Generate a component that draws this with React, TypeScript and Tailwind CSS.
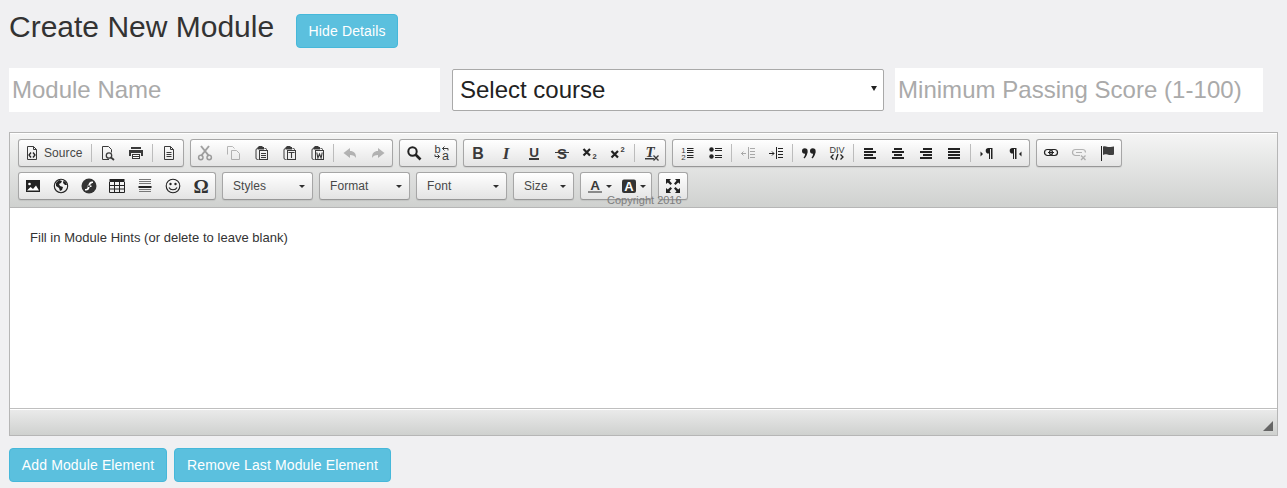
import React from "react";

const S = ({ children, o }: { children: React.ReactNode; o?: number }) => (
  <svg width="16" height="16" viewBox="0 0 16 16" className="block overflow-visible" style={o ? { opacity: o } : undefined}>{children}</svg>
);
const C = "#3a3a3a";
const sans = "'Liberation Sans', Arial, sans-serif";
const serif = "'Liberation Serif', serif";
const T = (p: { x: number; y: number; s: number; b?: boolean; i?: boolean; f?: string; c?: string; a?: "middle" | "start"; t: string }) => (
  <text x={p.x} y={p.y} fontSize={p.s} fontWeight={p.b ? 700 : 400} fontStyle={p.i ? "italic" : "normal"} fontFamily={p.f || sans} fill={p.c || C} textAnchor={p.a || "middle"}>{p.t}</text>
);
const Doc = () => <path d="M3.5 1.5h6l3 3v10h-9z M9.5 1.5v3h3" fill="none" stroke={C} />;
const Clip = () => (
  <>
    <path d="M5.5 3.500h-1a1.500 1.500 0 0 0-1.500 1.500v8a1.500 1.500 0 0 0 1.500 1.500h1" fill="none" stroke={C} />
    <path d="M5.500 1h4v1h1.500v2.500H4.500V2h1z" fill={C} />
    <path d="M11.500 3.500h1a1 1 0 0 1 1 1v1" fill="none" stroke={C} />
    <rect x="6.500" y="5.500" width="8" height="9" fill="none" stroke={C} />
  </>
);
const Lines = ({ d }: { d: [number, number][] }) => (
  <>{d.map(([x, w], i) => <rect key={i} x={x} y={3 + i * 3} width={w} height="2" fill="#222" />)}</>
);

const icons: Record<string, React.ReactNode> = {
  source: <S><Doc /><path d="M7 7.500 5 10l2 2.500M9 7.500 11 10l-2 2.500" fill="none" stroke="#222" strokeWidth="1.300" /></S>,
  preview: <S><path d="M9 14.500H2.500v-13h6l3 3v3" fill="none" stroke={C} /><circle cx="9" cy="10.500" r="2.700" fill="none" stroke={C} strokeWidth="1.300" /><path d="m11 12.500 3 2.500" stroke={C} strokeWidth="1.800" /></S>,
  print: <S><path d="M3 2h10v2H3z" fill={C} /><path d="M1 5h14v6h-2V8H3v3H1z" fill={C} /><path d="M4 9h8v5H4z" fill={C} /><path d="M5 10.500h6M5 12.500h6" stroke="#fff" /></S>,
  newpage: <S><Doc /><path d="M5.500 7.500h5M5.500 9.500h5M5.500 11.500h5" stroke={C} /></S>,
  cut: <S o={0.4}><path d="m4 1 8 10M12 1 4 11" stroke="#222" strokeWidth="2" /><circle cx="3.800" cy="12.500" r="2.200" fill="none" stroke="#222" strokeWidth="1.500" /><circle cx="12.200" cy="12.500" r="2.200" fill="none" stroke="#222" strokeWidth="1.500" /></S>,
  copy: <S o={0.3}><path d="M2.500 9.500v-8h5l2 2" fill="none" stroke="#222" /><path d="M6.500 5.500h5l3 3v6h-8z" fill="none" stroke="#222" /></S>,
  paste: <S><Clip /><path d="M8 8.500h5M8 10.500h5M8 12.500h5" stroke={C} /></S>,
  pastetext: <S><Clip /><path d="M8 8v-.500h5V8M10.500 7.500v5.500" fill="none" stroke={C} strokeWidth="1.100" /></S>,
  pasteword: <S><Clip /><path d="m7.800 7.500 1.100 5.500 1.600-4 1.600 4 1.100-5.500" fill="none" stroke={C} strokeWidth="1.100" /></S>,
  undo: <S o={0.3}><path d="M8 3 1.500 8 8 13v-3c3 0 5 1 6 3 0-5-2-7-6-7z" fill="#222" /></S>,
  redo: <S o={0.3}><path d="M8 3l6.500 5L8 13v-3c-3 0-5 1-6 3 0-5 2-7 6-7z" fill="#222" /></S>,
  find: <S><circle cx="6.500" cy="6.500" r="4.200" fill="none" stroke="#222" strokeWidth="2" /><path d="m9.500 9.500 5 5" stroke="#222" strokeWidth="2.600" /></S>,
  replace: <S><T x={3.500} y={8} s={11} t="b" /><T x={11.500} y={15} s={12.500} t="a" /><path d="M14 5.500V3.500H8.500M10.500 1.500l-2 2 2 2M1 9.500v2h4.500M3.500 9.500l2 2-2 2" fill="none" stroke={C} /></S>,
  bold: <S><T x={8} y={13.500} s={16} b t="B" /></S>,
  italic: <S><T x={8} y={13.500} s={17} b i f={serif} t="I" /></S>,
  underline: <S><T x={8} y={11.500} s={13.500} b t="U" /><rect x="3" y="13" width="10" height="2" fill={C} /></S>,
  strike: <S><T x={8} y={13.500} s={15} b t="S" /><rect x="1" y="7" width="14" height="1" fill={C} /></S>,
  sub: <S><path d="m1.500 4 6.500 6.500M8 4l-6.500 6.500" stroke="#222" strokeWidth="2.200" /><T x={12.500} y={14} s={7.500} b t="2" /></S>,
  sup: <S><path d="m1.500 6 6.500 6.500M8 6l-6.500 6.500" stroke="#222" strokeWidth="2.200" /><T x={12.500} y={7} s={7.500} b t="2" /></S>,
  removeformat: <S><T x={7} y={12} s={15} b i f={serif} t="T" /><rect x="2" y="13" width="9" height="1.500" fill={C} /><path d="m10.500 10.500 5 5M15.500 10.500l-5 5" stroke={C} strokeWidth="1.300" /></S>,
  numbered: <S><T x={4.500} y={7.500} s={8} t="1" /><T x={4.500} y={15} s={8} t="2" /><path d="M8 3.500h6.500M8 5.500h6.500M8 7.500h6.500M8 10.500h6.500M8 12.500h6.500" stroke="#222" /></S>,
  bullet: <S><circle cx="4.500" cy="4.500" r="2.200" fill="#222" /><circle cx="4.500" cy="11.500" r="2.200" fill="#222" /><path d="M8 3.500h7M8 5.500h7M8 10.500h7M8 12.500h7" stroke="#222" /></S>,
  outdent: <S o={0.35}><path d="M8.500 2v12" stroke="#222" /><path d="M10 3.500h5M10 6.500h5M10 9.500h5M10 12.500h5M1 8.500h5M3.500 6.500l-2 2 2 2" fill="none" stroke="#222" /></S>,
  indent: <S><path d="M8.500 2v12" stroke="#222" /><path d="M10 3.500h5M10 6.500h5M10 9.500h5M10 12.500h5M1 8.500h5M4 6.500l2 2-2 2" fill="none" stroke="#222" /></S>,
  quote: <S><circle cx="3.800" cy="6" r="2.800" fill="#222" /><circle cx="11.800" cy="6" r="2.800" fill="#222" /><path d="M6.600 6.500C6.300 9.500 5.300 12 3.300 13.500L2.500 12.500C3.500 11.500 4.100 10 4.100 8zM14.600 6.500c-.3 3-1.300 5.500-3.300 7l-.8-1c1-1 1.600-2.500 1.600-4.500z" fill="#222" /></S>,
  div: <S><T x={8} y={7.500} s={9} t="DIV" /><path d="M4.500 9.500 2 12l2.500 2.500M11.500 9.500 14 12l-2.500 2.500M9 9 7 15" fill="none" stroke="#222" strokeWidth="1.300" /></S>,
  left: <S><Lines d={[[2, 9], [2, 12], [2, 9], [2, 12]]} /></S>,
  center: <S><Lines d={[[4, 8], [2, 12], [4, 8], [2, 12]]} /></S>,
  right: <S><Lines d={[[5, 9], [2, 12], [5, 9], [2, 12]]} /></S>,
  justify: <S><Lines d={[[2, 12], [2, 12], [2, 12], [2, 12]]} /></S>,
  ltr: <S><path d="M1.500 6.500v5l2.500-2.500z" fill="#222" /><path d="M13.500 3H9.500a2.800 2.800 0 0 0 0 5.600h.5V14h1V4h1v10h1.500z" fill="#222" /></S>,
  rtl: <S><path d="M14.500 6.500v5L12 9z" fill="#222" /><path d="M9.500 3H5.500a2.800 2.800 0 0 0 0 5.600H6V14h1V4h1v10h1.500z" fill="#222" /></S>,
  link: <S><rect x="1.500" y="4.500" width="8" height="6" rx="3" fill="none" stroke="#222" strokeWidth="1.200" /><rect x="6.500" y="4.500" width="8" height="6" rx="3" fill="none" stroke="#222" strokeWidth="1.200" /><path d="M5 7.500h6" stroke="#222" /></S>,
  unlink: <S o={0.3}><path d="M9 10.500H4.500a3 3 0 0 1 0-6h7a3 3 0 0 1 3 3" fill="none" stroke="#222" strokeWidth="1.200" /><path d="M5 7.500h6" stroke="#222" /><path d="m10 10.500 4.500 4.500M14.500 10.500 10 15" stroke="#222" strokeWidth="1.300" /></S>,
  anchor: <S><path d="M2.500 1v15" stroke="#222" /><path d="M4 1.500c3-1 4 .5 6 .5s5-.5 5-.5v8c-2 1-5 .5-6.500 0S5 9 4 10z" fill="#3f3f3f" /></S>,
  image: <S><rect x="1" y="2" width="14" height="12" fill="#222" /><circle cx="4.500" cy="6" r="1.300" fill="#fff" /><path d="M2 12.500 5.500 9l2.500 2 3-3.500 3 5z" fill="#fff" /></S>,
  globe: <S><circle cx="8" cy="8" r="6.700" fill="none" stroke="#222" strokeWidth="1.100" /><path d="M3 5l3-3 3 1-1 2-2 1 1 2 3 1-1 3-2 1-1-3-3-2zM10.500 2.500l2.500 2 1 2.500-2 0-2-2z" fill="#222" /></S>,
  flash: <S><circle cx="8" cy="8" r="7.500" fill="#333" /><path d="M12 3.500c-3-.5-4 1-4.500 3l-1 3c-.3 1-1 1.500-2.500 1.500v1.500c3 .5 4-1 4.500-3l1-3C10 5.500 11 5 12 5z M6.500 7.500h4v1.500h-4z" fill="#fff" /></S>,
  table: <S><rect x="0.500" y="1" width="15" height="3" fill="#222" /><path d="M.5 4v10.500h15V4M.5 7.500h15M.5 11h15M5.500 4v10.500M10.500 4v10.500" fill="none" stroke="#222" /></S>,
  hr: <S><path d="M2 1.500h12M2 3.500h12M2 5.500h12M2 11.500h12M2 13.500h12" stroke="#777" /><rect x="1.500" y="8" width="13" height="2" fill="#222" /></S>,
  smile: <S><circle cx="8" cy="8" r="6.800" fill="none" stroke="#222" strokeWidth="1.100" /><circle cx="5.500" cy="6" r="1.200" fill="#222" /><circle cx="10.500" cy="6" r="1.200" fill="#222" /><path d="M4 9.500c1.500 3 6.500 3 8 0" fill="none" stroke="#222" strokeWidth="1.100" /></S>,
  maximize: <S><path d="M1 1h5L4.500 2.800 7 5.500 5.500 7 2.800 4.500 1 6zM15 1h-5l1.500 1.800L9 5.500 10.500 7l2.700-2.500L15 6zM1 15h5l-1.500-1.800L7 10.500 5.500 9l-2.700 2.500L1 10zM15 15h-5l1.500-1.800L9 10.500 10.500 9l2.700 2.500L15 10z" fill="#222" /></S>,
};

const gradient = "bg-gradient-to-b from-[#ffffff] to-[#e4e4e4] border border-[#a6a6a6] border-b-[#979797] rounded-[3px] shadow-[0_1px_1px_rgba(0,0,0,0.08)] h-[28px]";

const Btn = ({ n }: { n: string }) => (
  <div className="w-[28px] h-[26px] flex items-center justify-center">{icons[n]}</div>
);
const Sep = () => <div className="w-px h-[18px] bg-[#bcbcbc] mx-[2px]" />;
const Group = ({ items }: { items: string[] }) => (
  <div className={`${gradient} flex items-center`}>
    {items.map((n, i) => (n === "|" ? <Sep key={i} /> : <Btn key={i} n={n} />))}
  </div>
);
const Combo = ({ label, w }: { label: string; w: string }) => (
  <div className={`${gradient} ${w} flex items-center pl-[10px] pr-[6px] justify-between`}>
    <span className="text-[12px] tracking-[0.08px] text-[#484848]">{label}</span>
    <span className="w-0 h-0 border-x-[3px] border-x-transparent border-t-[3px] border-t-[#2f2f2f] mr-[1px]" />
  </div>
);
const Arrow = () => <span className="w-0 h-0 border-x-[3px] border-x-transparent border-t-[3px] border-t-[#2f2f2f]" />;

export default function App() {
  return (
    <div className="min-h-[488px] bg-[#f0f0f2] pl-[9px] pr-[9px] pt-[14px] overflow-hidden font-['Liberation_Sans',Arial,sans-serif] text-[#333333]">
      <div className="flex items-center h-[34px]">
        <h1 className="text-[30px] leading-[26px] mb-[8px] font-normal">Create New Module</h1>
        <button className="ml-[22px] h-[34px] w-[102px] whitespace-nowrap text-[14px] tracking-[0.13px] text-white bg-[#5bc0de] border border-[#46b8da] rounded-[4px]">Hide Details</button>
      </div>

      <div className="flex items-center mt-[20px] h-[44px]">
        <input className="w-[431px] h-[44px] bg-white text-[24px] pl-[3px] outline-none placeholder:text-[#aaaaaa]" placeholder="Module Name" />
        <div className="relative ml-[12px] w-[432px] h-[42px] bg-white border border-[#a9a9a9] rounded-[2px] flex items-center pl-[7px] text-[24px] text-[#222222]">
          Select course
          <span className="absolute right-[6px] top-[16px] w-0 h-0 border-x-[3px] border-x-transparent border-t-[5px] border-t-[#222222]" />
        </div>
        <input className="ml-[11px] w-[368px] h-[44px] bg-white text-[24px] tracking-[0.03px] pl-[3px] outline-none placeholder:text-[#aaaaaa]" placeholder="Minimum Passing Score (1-100)" />
      </div>

      <div className="mt-[20px] w-[1269px] h-[304px] border border-[#b6b6b6] flex flex-col bg-white">
        <div className="relative h-[75px] shrink-0 bg-gradient-to-b from-[#f5f5f5] to-[#cfd1cf] border-b border-[#b6b6b6] shadow-[inset_0_1px_0_#ffffff] pl-[8px] pt-[6px] flex flex-col gap-[5px]">
          <div className="flex gap-[6px]">
            <div className={`${gradient} flex items-center`}>
              <div className="w-[70px] h-[26px] flex items-center pl-[5px]">
                {icons.source}
                <span className="ml-[4px] text-[12px] tracking-[0.08px] text-[#474747]">Source</span>
              </div>
              <Sep />
              <Btn n="preview" />
              <Btn n="print" />
              <Sep />
              <Btn n="newpage" />
            </div>
            <Group items={["cut", "copy", "paste", "pastetext", "pasteword", "|", "undo", "redo"]} />
            <Group items={["find", "replace"]} />
            <Group items={["bold", "italic", "underline", "strike", "sub", "sup", "|", "removeformat"]} />
            <Group items={["numbered", "bullet", "|", "outdent", "indent", "|", "quote", "div", "|", "left", "center", "right", "justify", "|", "ltr", "rtl"]} />
            <Group items={["link", "unlink", "anchor"]} />
          </div>
          <div className="flex gap-[6px]">
            <div className={`${gradient} flex items-center`}>
              <Btn n="image" />
              <Btn n="globe" />
              <Btn n="flash" />
              <Btn n="table" />
              <Btn n="hr" />
              <Btn n="smile" />
              <div className="w-[28px] h-[26px] flex items-center justify-center text-[19px] leading-none font-bold font-['Liberation_Serif',serif] text-[#333333]">Ω</div>
            </div>
            <Combo label="Styles" w="w-[91px]" />
            <Combo label="Format" w="w-[91px]" />
            <Combo label="Font" w="w-[91px]" />
            <Combo label="Size" w="w-[61px]" />
            <div className={`${gradient} w-[72px] flex items-center`}>
              <div className="w-[35px] h-[26px] flex items-center pl-[6px] gap-[3px]">
                <svg width="16" height="16" viewBox="0 0 16 16" className="block overflow-visible">
                  <T x={8} y={11.500} s={13.500} b t="A" />
                  <rect x="1" y="13" width="14" height="2" fill="#8a8a8a" />
                </svg>
                <Arrow />
              </div>
              <div className="w-[35px] h-[26px] flex items-center pl-[5px] gap-[3px]">
                <svg width="16" height="16" viewBox="0 0 16 16" className="block overflow-visible">
                  <rect x="1" y="1.500" width="14" height="13.500" rx="2" fill="#333333" />
                  <T x={8} y={13} s={13} b c="#ffffff" t="A" />
                </svg>
                <Arrow />
              </div>
            </div>
            <Group items={["maximize"]} />
          </div>
          <span className="absolute left-[597px] top-[61px] text-[11px] leading-[13px] text-[#7d7d7d]">Copyright 2016</span>
        </div>
        <div className="flex-1 bg-white pl-[20px] pt-[22px] text-[13px] tracking-[0.03px] leading-[16px] text-[#333333]">Fill in Module Hints (or delete to leave blank)</div>
        <div className="h-[27px] shrink-0 bg-gradient-to-b from-[#ebebeb] to-[#cfd1cf] border-t border-[#bfbfbf] shadow-[inset_0_1px_0_#ffffff] flex justify-end items-end pr-[4px] pb-[4px]">
          <svg width="10" height="10" viewBox="0 0 10 10" className="block"><path d="M10 0v10H0z" fill="#666666" /></svg>
        </div>
      </div>

      <div className="flex gap-[7px] mt-[12px]">
        <button className="h-[34px] w-[158px] text-[14px] tracking-[0.13px] text-white bg-[#5bc0de] border border-[#46b8da] rounded-[4px]">Add Module Element</button>
        <button className="h-[34px] w-[217px] text-[14px] tracking-[0.13px] text-white bg-[#5bc0de] border border-[#46b8da] rounded-[4px]">Remove Last Module Element</button>
      </div>
    </div>
  );
}
